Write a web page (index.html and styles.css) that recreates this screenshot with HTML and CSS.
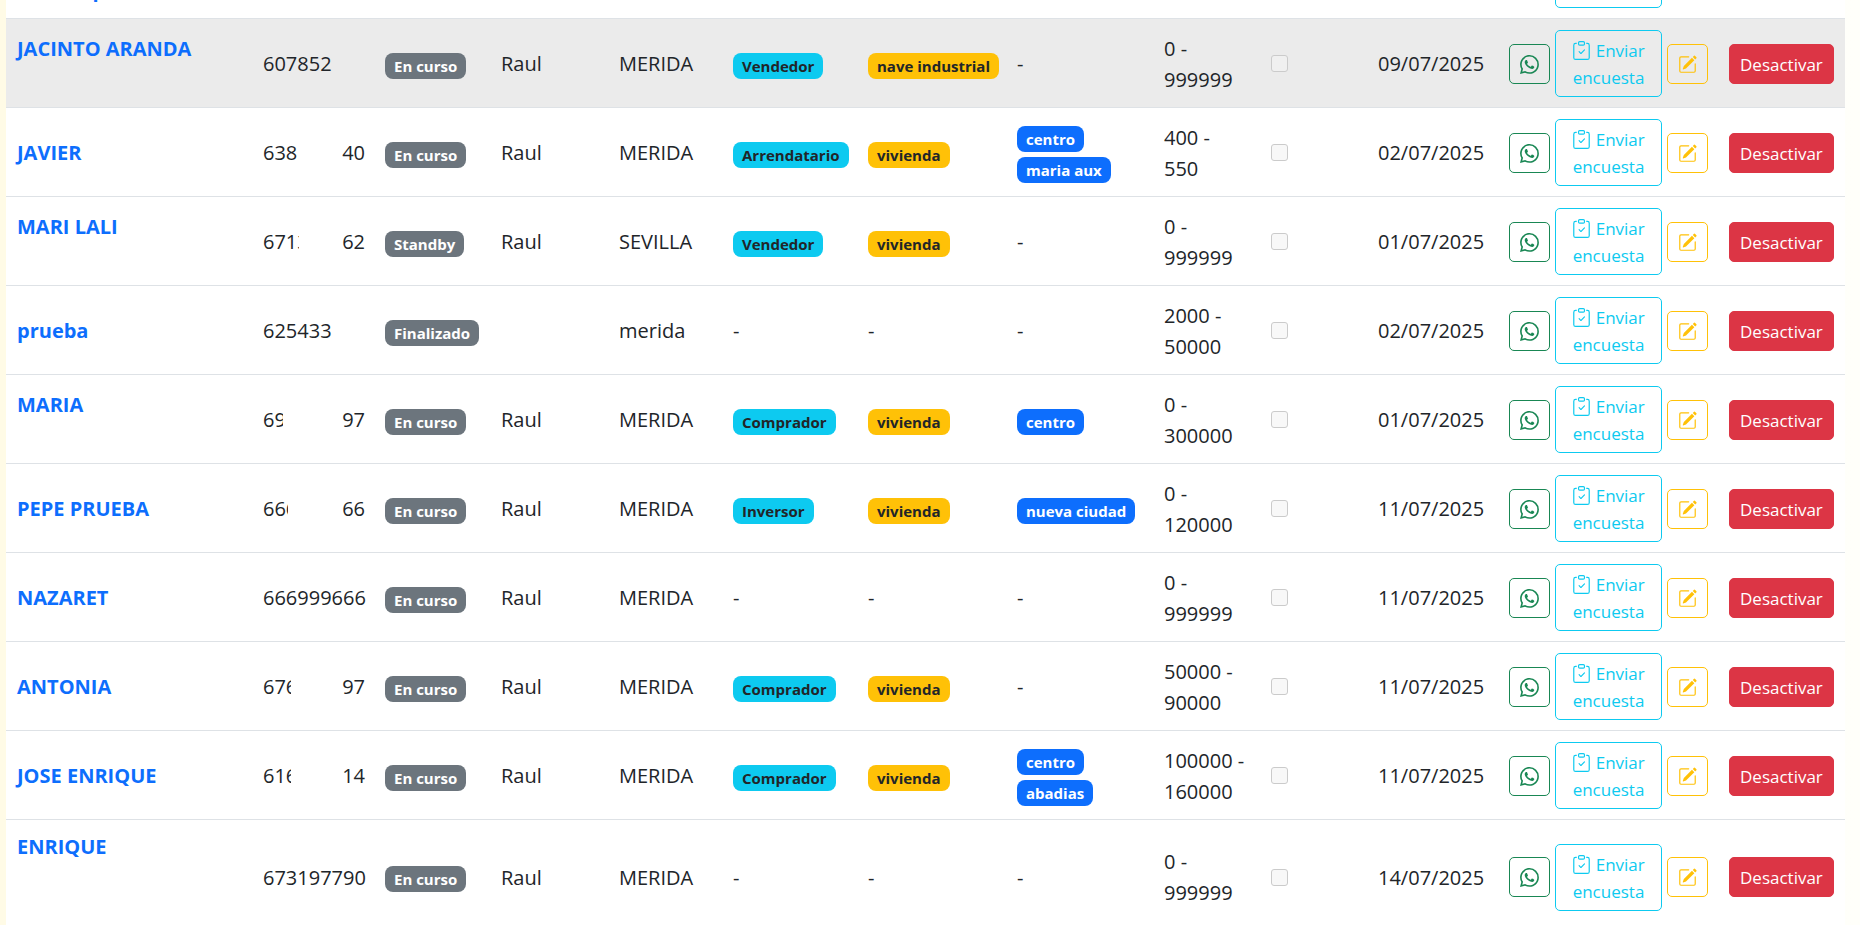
FILE: index.html
```
<!DOCTYPE html>
<html lang="es">
<head>
<meta charset="utf-8">
<title>Clientes</title>
<link rel="stylesheet" href="styles.css">
</head>
<body>
<svg class="sprite" aria-hidden="true">
  <symbol id="whatsapp" viewBox="0 0 16 16"><path d="M13.601 2.326A7.85 7.85 0 0 0 7.994 0C3.627 0 .068 3.558.064 7.926c0 1.399.366 2.76 1.057 3.965L0 16l4.204-1.102a7.9 7.9 0 0 0 3.79.965h.004c4.368 0 7.926-3.558 7.93-7.93A7.9 7.9 0 0 0 13.6 2.326zM7.994 14.521a6.6 6.6 0 0 1-3.356-.92l-.24-.144-2.494.654.666-2.433-.156-.251a6.56 6.56 0 0 1-1.007-3.505c0-3.626 2.957-6.584 6.591-6.584a6.56 6.56 0 0 1 4.66 1.931 6.56 6.56 0 0 1 1.928 4.66c-.004 3.639-2.961 6.592-6.592 6.592m3.615-4.934c-.197-.099-1.17-.578-1.353-.646-.182-.065-.315-.099-.445.099-.133.197-.513.646-.627.775-.114.133-.232.148-.43.05-.197-.1-.836-.308-1.592-.985-.59-.525-.985-1.175-1.103-1.372-.114-.198-.011-.304.088-.403.087-.088.197-.232.296-.346.1-.114.133-.198.198-.33.065-.134.034-.248-.015-.347-.05-.099-.445-1.076-.612-1.47-.16-.389-.323-.335-.445-.34-.114-.007-.247-.007-.38-.007a.73.73 0 0 0-.529.247c-.182.198-.691.677-.691 1.654s.71 1.916.81 2.049c.098.133 1.394 2.132 3.383 2.992.47.205.84.326 1.129.418.475.152.904.129 1.246.08.38-.058 1.171-.48 1.338-.943.164-.464.164-.86.114-.943-.049-.084-.182-.133-.38-.232"/></symbol>
  <symbol id="clipboard" viewBox="0 0 16 16"><path fill-rule="evenodd" d="M10.854 7.146a.5.5 0 0 1 0 .708l-3 3a.5.5 0 0 1-.708 0l-1.5-1.5a.5.5 0 1 1 .708-.708L7.5 9.793l2.646-2.647a.5.5 0 0 1 .708 0"/><path d="M4 1.5H3a2 2 0 0 0-2 2V14a2 2 0 0 0 2 2h10a2 2 0 0 0 2-2V3.500a2 2 0 0 0-2-2h-1v1h1a1 1 0 0 1 1 1V14a1 1 0 0 1-1 1H3a1 1 0 0 1-1-1V3.500a1 1 0 0 1 1-1h1z"/><path d="M9.500 1a.5.5 0 0 1 .5.5v1a.5.5 0 0 1-.5.5h-3a.5.5 0 0 1-.5-.5v-1a.5.5 0 0 1 .5-.5zm-3-1A1.500 1.500 0 0 0 5 1.500v1A1.500 1.500 0 0 0 6.500 4h3A1.500 1.500 0 0 0 11 2.500v-1A1.500 1.500 0 0 0 9.500 0z"/></symbol>
  <symbol id="pencil" viewBox="0 0 16 16"><path d="M15.502 1.940a.5.5 0 0 1 0 .706L14.459 3.690l-2-2L13.502.646a.5.5 0 0 1 .707 0l1.293 1.293zm-1.750 2.456-2-2L4.939 9.210a.5.5 0 0 0-.121.196l-.805 2.414a.25.25 0 0 0 .316.316l2.414-.805a.5.5 0 0 0 .196-.12l6.813-6.814z"/><path fill-rule="evenodd" d="M1 13.500A1.500 1.500 0 0 0 2.500 15h11a1.500 1.500 0 0 0 1.500-1.500v-6a.5.5 0 0 0-1 0v6a.5.5 0 0 1-.5.5h-11a.5.5 0 0 1-.5-.5v-11a.5.5 0 0 1 .5-.5H9a.5.5 0 0 0 0-1H2.500A1.500 1.500 0 0 0 1 2.500z"/></symbol>
</svg>
<main class="panel">
<table class="clients">
  <colgroup>
    <col class="c-name"><col class="c-phone"><col class="c-state"><col class="c-agent"><col class="c-city"><col class="c-type"><col class="c-kind"><col class="c-zone"><col class="c-price"><col class="c-check"><col class="c-date"><col class="c-actions"><col class="c-off">
  </colgroup>
  <tbody id="rows"></tbody>
</table>
</main>
<script src="app.js"></script>
</body>
</html>
```
FILE: app.js
```
// phone: [visible start, visible end, class that trims the start]
const clients = [
  { name: ['&nbsp;', 'Cliente prueba'], phone: [''], state: '', agent: '', city: '', zones: [], price: [''], date: '' },
  { name: ['JACINTO ARANDA', '&nbsp;'], phone: ['607852'], state: 'En curso', agent: 'Raul', city: 'MERIDA', type: 'Vendedor', kind: 'nave industrial', zones: [], price: ['0 -', '999999'], date: '09/07/2025', hover: true },
  { name: ['JAVIER'], phone: ['638', '40', ''], state: 'En curso', agent: 'Raul', city: 'MERIDA', type: 'Arrendatario', kind: 'vivienda', zones: ['centro', 'maria aux'], price: ['400 -', '550'], date: '02/07/2025' },
  { name: ['MARI LALI', '&nbsp;'], phone: ['6713', '62', 'cut-xl'], state: 'Standby', agent: 'Raul', city: 'SEVILLA', type: 'Vendedor', kind: 'vivienda', zones: [], price: ['0 -', '999999'], date: '01/07/2025' },
  { name: ['prueba'], phone: ['625433'], state: 'Finalizado', agent: '', city: 'merida', zones: [], price: ['2000 -', '50000'], date: '02/07/2025' },
  { name: ['MARIA', '&nbsp;'], phone: ['69', '97', 'cut-s'], state: 'En curso', agent: 'Raul', city: 'MERIDA', type: 'Comprador', kind: 'vivienda', zones: ['centro'], price: ['0 -', '300000'], date: '01/07/2025' },
  { name: ['PEPE PRUEBA'], phone: ['666', '66', 'cut-m'], state: 'En curso', agent: 'Raul', city: 'MERIDA', type: 'Inversor', kind: 'vivienda', zones: ['nueva ciudad'], price: ['0 -', '120000'], date: '11/07/2025' },
  { name: ['NAZARET'], phone: ['666999666'], state: 'En curso', agent: 'Raul', city: 'MERIDA', zones: [], price: ['0 -', '999999'], date: '11/07/2025' },
  { name: ['ANTONIA'], phone: ['676', '97', 'cut-l'], state: 'En curso', agent: 'Raul', city: 'MERIDA', type: 'Comprador', kind: 'vivienda', zones: [], price: ['50000 -', '90000'], date: '11/07/2025' },
  { name: ['JOSE ENRIQUE'], phone: ['616', '14', 'cut-l'], state: 'En curso', agent: 'Raul', city: 'MERIDA', type: 'Comprador', kind: 'vivienda', zones: ['centro', 'abadias'], price: ['100000 -', '160000'], date: '11/07/2025' },
  { name: ['ENRIQUE', '&nbsp;', '&nbsp;'], phone: ['673197790'], state: 'En curso', agent: 'Raul', city: 'MERIDA', zones: [], price: ['0 -', '999999'], date: '14/07/2025' }
];

const icon = id => `<svg class="icon" aria-hidden="true"><use href="#${id}"/></svg>`;
const badge = (text, tone) => text ? `<span class="badge ${tone}">${text}</span>` : '-';
const phone = p => p.length === 1 ? p[0]
  : `<span class="phone"><span class="start ${p[2]}">${p[0]}</span><span>${p[1]}</span></span>`;

document.getElementById('rows').innerHTML = clients.map(c => `
  <tr${c.hover ? ' class="hover"' : ''}>
    <td><a class="name" href="#">${c.name.join('<br>')}</a></td>
    <td>${phone(c.phone)}</td>
    <td>${badge(c.state, 'gray')}</td>
    <td>${c.agent}</td>
    <td>${c.city}</td>
    <td>${badge(c.type, 'cyan')}</td>
    <td>${badge(c.kind, 'amber')}</td>
    <td>${c.zones.map(z => badge(z, 'blue')).join('<br>') || '-'}</td>
    <td>${c.price.join('<br>')}</td>
    <td><input type="checkbox" class="check" aria-label="Seleccionar" disabled></td>
    <td>${c.date}</td>
    <td><div class="actions">
      <button class="btn green" aria-label="WhatsApp">${icon('whatsapp')}</button>
      <button class="btn survey">${icon('clipboard')} Enviar<br>encuesta</button>
      <button class="btn yellow" aria-label="Editar">${icon('pencil')}</button>
    </div></td>
    <td><button class="btn red">Desactivar</button></td>
  </tr>`).join('');
```
FILE: styles.css
```
* { box-sizing: border-box; }
body {
  margin: 0;
  height: 100vh;
  overflow: hidden;
  background: linear-gradient(to right, #fffbe6, #fffffa);
  color: #212529;
  font-family: "Open Sans", "Noto Sans", sans-serif;
  font-size: 20px;
  line-height: 31px;
}
.sprite { display: none; }
.panel { margin: -71px 15px 0 6px; background: #fff; }
.clients { width: 100%; table-layout: fixed; border-collapse: collapse; }
.c-name { width: 246px; }
.c-phone { width: 122px; }
.c-state { width: 116px; }
.c-agent { width: 118px; }
.c-city { width: 114px; }
.c-type { width: 135px; }
.c-kind { width: 149px; }
.c-zone { width: 147px; }
.c-price { width: 107px; }
.c-check { width: 107px; }
.c-date { width: 131px; }
.c-actions { width: 220px; }
.c-off { width: 127px; }
td {
  height: 89px;
  padding: 11px 0 9px 11px;
  border-bottom: 1px solid #dee2e6;
  vertical-align: middle;
  white-space: nowrap;
}
.hover td { background: #ebebeb; }
.name { color: #0d6efd; font-weight: 700; text-decoration: none; }
.phone { display: flex; justify-content: space-between; width: 102px; }
.start { overflow: hidden; }
.cut-s { width: 20px; }
.cut-m { width: 25px; }
.cut-l { width: 28px; }
.cut-xl { width: 36px; }
.badge {
  display: inline-block;
  padding: 5px 9px;
  border-radius: 8px;
  font-size: 15px;
  font-weight: 700;
  line-height: 16px;
  vertical-align: middle;
}
.gray { background: #6c757d; color: #fff; }
.cyan { background: #0dcaf0; }
.amber { background: #ffc107; }
.blue { background: #0d6efd; color: #fff; }
.check {
  appearance: none;
  display: block;
  width: 17px;
  height: 17px;
  margin: 0;
  border: 1px solid #cbcbcb;
  border-radius: 3px;
  background: #f8f8f8;
}
.hover .check { background: #f0f0f0; }
.actions { display: flex; align-items: center; gap: 5px; }
.btn {
  padding: 6px 10px 5px;
  border: 1px solid currentColor;
  border-radius: 5px;
  background: transparent;
  font-family: inherit;
  font-size: 17px;
  line-height: 27px;
}
.icon { width: 19px; height: 19px; fill: currentColor; vertical-align: -3px; }
.green { color: #198754; }
.survey { width: 107px; color: #0dcaf0; }
.yellow { color: #ffc107; }
.red { border-color: #dc3545; background: #dc3545; color: #fff; }
```
